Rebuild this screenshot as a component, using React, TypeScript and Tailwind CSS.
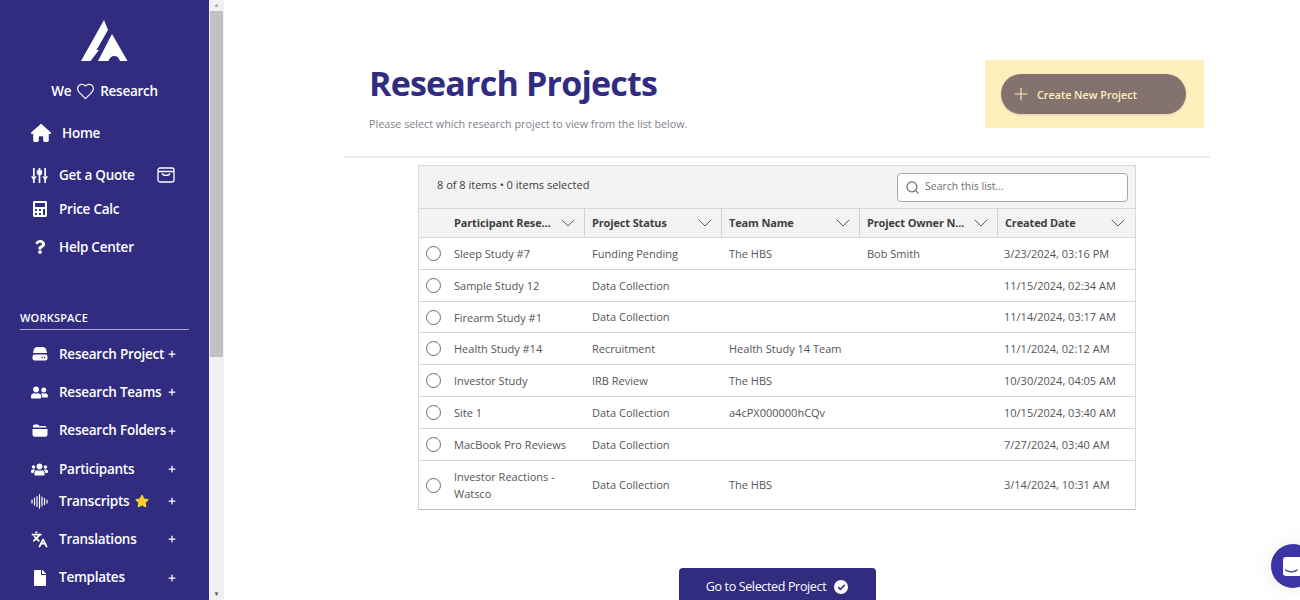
import { Check, ChevronDown, Languages, Plus, Search } from "lucide-react";
import { FaCalculator, FaFile, FaQuestion, FaStar, FaUserFriends, FaUsers } from "react-icons/fa";
import { FaHouse } from "react-icons/fa6";
import { LuHeart } from "react-icons/lu";
import type { ReactNode } from "react";

const font = "font-['Open_Sans','Noto_Sans',sans-serif]";

function SlidersIcon() {
  return (
    <svg width="18" height="17" viewBox="0 0 18 17" fill="white" stroke="white">
      <path d="M3 0.5 V9 M9 0.5 V3 M9 8 V16.5 M15 0.5 V9 M3 13 V16.5 M15 13 V16.5" strokeWidth="1.8" />
      <path d="M0.5 9.5 H5.5 L3 14 Z M6.5 3 H11.5 L11.5 7 L9 8.5 L6.5 7 Z M12.5 9.5 H17.5 L15 14 Z" strokeWidth="0.5" />
    </svg>
  );
}

function WaveIcon() {
  return (
    <svg width="17" height="15" viewBox="0 0 17 15" stroke="white" strokeWidth="1.2" strokeLinecap="round">
      <path d="M1 6 V9 M3.5 4 V11 M6 2.5 V12.5 M8.5 0.7 V14.3 M11 3 V12 M13.5 4.5 V10.5 M16 6 V9" />
    </svg>
  );
}

function DriveIcon() {
  return (
    <svg width="16" height="14" viewBox="0 0 16 14" fill="white">
      <path d="M1 6 L1.8 2.5 Q2.4 0 5 0 H11 Q13.6 0 14.2 2.5 L15 6 Z" />
      <path d="M2.5 7.5 H13.5 Q15.5 7.5 15.5 9.5 V11.5 Q15.5 13.5 13.5 13.5 H2.5 Q0.5 13.5 0.5 11.5 V9.5 Q0.5 7.5 2.5 7.5 Z M9.5 9.8 V11.2 H10.8 V9.8 Z M12 9.8 V11.2 H13.3 V9.8 Z" fillRule="evenodd" />
    </svg>
  );
}

function FolderIcon() {
  return (
    <svg width="16" height="13" viewBox="0 0 16 13" fill="white">
      <path d="M1 3.5 V2 Q1 0.5 2.5 0.5 H6 L7.5 2 H13 Q14.5 2 14.5 3.5 Z" />
      <path d="M0.5 5 H15.5 V10.5 Q15.5 12.8 13.2 12.8 H2.8 Q0.5 12.8 0.5 10.5 Z" />
    </svg>
  );
}

const navTop = [
  { label: "Home", icon: <FaHouse size={20} />, className: "h-[34px] mt-[3px]", iconClass: "w-[20px]" },
  { label: "Get a Quote", icon: <SlidersIcon />, className: "h-[34px] mt-[8px]", iconClass: "w-[17px]" },
  { label: "Price Calc", icon: <FaCalculator size={16} />, className: "h-[34px]", iconClass: "w-[17px]" },
  { label: "Help Center", icon: <FaQuestion size={14} />, className: "h-[34px] mt-[4px]", iconClass: "w-[17px]" },
];

const workspace: { label: string; icon: ReactNode; h: string; star?: boolean }[] = [
  { label: "Research Project", icon: <DriveIcon />, h: "h-[37px]" },
  { label: "Research Teams", icon: <FaUserFriends size={17} />, h: "h-[39px]" },
  { label: "Research Folders", icon: <FolderIcon />, h: "h-[38px]" },
  { label: "Participants", icon: <FaUsers size={17} />, h: "h-[39px]" },
  { label: "Transcripts", icon: <WaveIcon />, h: "h-[25px]", star: true },
  { label: "Translations", icon: <Languages size={19} strokeWidth={2.4} />, h: "h-[51px]" },
  { label: "Templates", icon: <FaFile size={16} />, h: "h-[26px]" },
];

const columns = ["Participant Rese...", "Project Status", "Team Name", "Project Owner N...", "Created Date"];

const rows = [
  { name: "Sleep Study #7", status: "Funding Pending", team: "The HBS", owner: "Bob Smith", date: "3/23/2024, 03:16 PM", h: "h-[32px]" },
  { name: "Sample Study 12", status: "Data Collection", team: "", owner: "", date: "11/15/2024, 02:34 AM", h: "h-[32px]" },
  { name: "Firearm Study #1", status: "Data Collection", team: "", owner: "", date: "11/14/2024, 03:17 AM", h: "h-[31px]" },
  { name: "Health Study #14", status: "Recruitment", team: "Health Study 14 Team", owner: "", date: "11/1/2024, 02:12 AM", h: "h-[32px]" },
  { name: "Investor Study", status: "IRB Review", team: "The HBS", owner: "", date: "10/30/2024, 04:05 AM", h: "h-[32px]" },
  { name: "Site 1", status: "Data Collection", team: "a4cPX000000hCQv", owner: "", date: "10/15/2024, 03:40 AM", h: "h-[32px]" },
  { name: "MacBook Pro Reviews", status: "Data Collection", team: "", owner: "", date: "7/27/2024, 03:40 AM", h: "h-[32px]" },
  { name: "Investor Reactions - Watsco", status: "Data Collection", team: "The HBS", owner: "", date: "3/14/2024, 10:31 AM", h: "h-[48px]" },
];

function Logo() {
  return (
    <svg width="47" height="41" viewBox="0 0 47 41" fill="white">
      <path d="M23 0 L27 10 L15.5 30 L18 30 L9.5 41 L0 41 Z" />
      <path d="M31 14 L46.5 41 L39 41 C37.5 34.5 29.5 34 27.5 41 L17 41 Z" />
    </svg>
  );
}

function Sidebar() {
  return (
    <aside className="w-[209px] h-full shrink-0 bg-[#312c7f] text-white font-semibold text-[13.5px] tracking-[-0.25px]">
      <div className="flex justify-center pt-[20px]">
        <Logo />
      </div>
      <div className="flex items-center justify-center gap-[5px] mt-[15px] h-[30px]">
        <span>We</span>
        <LuHeart size={19} strokeWidth={1.5} />
        <span>Research</span>
      </div>
      <nav className="mt-[10px] pl-[31px]">
        {navTop.map((item) => (
          <div key={item.label} className={`flex items-center ${item.className}`}>
            <span className={`${item.iconClass} flex justify-center`}>{item.icon}</span>
            <span className="ml-[11px]">{item.label}</span>
            {item.label === "Get a Quote" && (
              <svg className="ml-[22px]" width="18" height="16" viewBox="0 0 18 16" fill="none" stroke="white" strokeWidth="1.3">
                <rect x="1" y="1" width="16" height="14" rx="2" />
                <path d="M1 4.5 H17 M5 6.5 C6 9 12 9 13 6.5" />
              </svg>
            )}
          </div>
        ))}
      </nav>
      <div className="mx-[20px] mt-[46px] pb-[2px] border-b border-[#a9a7d0] text-[11px] tracking-[0.2px]">WORKSPACE</div>
      <div className="mt-[6px] pl-[31px] pr-[32px]">
        {workspace.map((item) => (
          <div key={item.label} className={`flex items-center ${item.h}`}>
            <span className="w-[17px] flex justify-center shrink-0">{item.icon}</span>
            <span className="ml-[11px] whitespace-nowrap">{item.label}</span>
            {item.star && <FaStar size={14} className="ml-[6px] text-[#fbd02d]" />}
            <Plus size={10} strokeWidth={3} className="ml-auto shrink-0" />
          </div>
        ))}
      </div>
    </aside>
  );
}

function Scrollbar() {
  return (
    <div className="w-[15px] h-full shrink-0 bg-[#f1f1f1] flex flex-col items-center">
      <span className="h-[11px] text-[6px] leading-[11px] text-[#a3a3a3]">▲</span>
      <div className="w-[13px] h-[346px] bg-[#c1c1c1]" />
      <span className="mt-auto h-[11px] text-[6px] leading-[11px] text-[#505050]">▼</span>
    </div>
  );
}

function Table() {
  const grid = "grid grid-cols-[165px_137px_138px_138px_137px]";
  return (
    <div className="mx-[74px] mt-[7px] border border-[#d8d8d8] border-b-[#bdbdbd] w-[718px]">
      <div className="h-[42px] bg-[#f3f3f3] flex items-center justify-between pl-[18px] pr-[7px] text-[11px] text-[#3e3e3c]">
        <span className="mb-[3px]">8 of 8 items • 0 items selected</span>
        <div className="w-[231px] h-[29px] bg-white border border-[#a8a8a8] rounded-[4px] flex items-center pl-[7px] text-[#706e6b]">
          <Search size={15} strokeWidth={2} />
          <span className="ml-[5px] text-[10.5px]">Search this list...</span>
        </div>
      </div>
      <div className={`${grid} h-[30px] bg-[#f3f3f3] border-y border-[#d8d8d8]`}>
        {columns.map((col, i) => (
          <div key={col} className={`flex items-center pr-[4px] border-[#d0d0d0] ${i === 0 ? "pl-[35px]" : "pl-[7px] border-l"}`}>
            <span className="text-[11px] font-bold text-[#3e3e3c] whitespace-nowrap tracking-[-0.15px]">{col}</span>
            <ChevronDown size={24} strokeWidth={1} className="ml-auto shrink-0 text-[#5c5c5c]" />
          </div>
        ))}
      </div>
      {rows.map((row) => (
        <div key={row.name} className={`${grid} ${row.h} items-center border-b border-[#d8d8d8] last:border-b-0 text-[11px] text-[#555558] bg-white`}>
          <div className="flex items-center pl-[7px]">
            <span className="w-[15px] h-[15px] rounded-full border border-[#6b6b6b] shrink-0" />
            <span className="ml-[13px] leading-[17px] pr-[4px]">{row.name}</span>
          </div>
          <span className="pl-[8px] pt-[1px]">{row.status}</span>
          <span className="pl-[8px] pt-[1px]">{row.team}</span>
          <span className="pl-[8px] pt-[1px]">{row.owner}</span>
          <span className="pl-[7px] pt-[1px] whitespace-nowrap">{row.date}</span>
        </div>
      ))}
    </div>
  );
}

export default function App() {
  return (
    <div className={`relative w-[1300px] h-[600px] overflow-hidden flex bg-white ${font}`}>
      <Sidebar />
      <Scrollbar />
      <main className="flex-1 pl-[120px] pr-[90px] min-w-0">
        <div className="flex justify-between h-[158px] border-b-2 border-[#ececec]">
          <div className="pl-[25px] pt-[60px]">
            <h1 className="text-[34px] leading-[47px] font-bold tracking-[-0.8px] text-[#312c7f]">Research Projects</h1>
            <p className="mt-[10px] text-[10.75px] leading-[14px] text-[#80808a]">
              Please select which research project to view from the list below.
            </p>
          </div>
          <div className="mt-[60px] mr-[6px] w-[219px] h-[68px] bg-[#fdf0bc] flex items-center pl-[16px]">
            <button className="w-[185px] h-[40px] rounded-full bg-[#84726e] flex items-center pl-[10px] text-[#fdf0bc] text-[10.75px] font-semibold shadow-sm">
              <Plus size={20} strokeWidth={1.3} />
              <span className="ml-[6px] pt-[2px]">Create New Project</span>
            </button>
          </div>
        </div>
        <Table />
        <div className="flex justify-center mt-[58px]">
          <button className="w-[197px] h-[38px] rounded-[4px] bg-[#312c7f] text-white text-[12.5px] tracking-[-0.35px] flex items-center justify-center">
            Go to Selected Project
            <span className="ml-[8px] w-[14px] h-[14px] rounded-full bg-white flex items-center justify-center">
              <Check size={9} strokeWidth={4} className="text-[#312c7f]" />
            </span>
          </button>
        </div>
      </main>
      <div className="absolute left-[1271px] top-[544px] w-[44px] h-[44px] rounded-full bg-[#3c33a6] shadow-[0_0_20px_rgba(0,0,0,0.08)] flex items-center pl-[12px]">
        <svg width="24" height="19" viewBox="0 0 24 19" fill="none">
          <rect width="24" height="19" rx="3" fill="white" />
          <path d="M2.5 13 C6 15.5 11 15.5 14 13" stroke="#3c33a6" strokeWidth="1.2" strokeLinecap="round" />
        </svg>
      </div>
    </div>
  );
}
